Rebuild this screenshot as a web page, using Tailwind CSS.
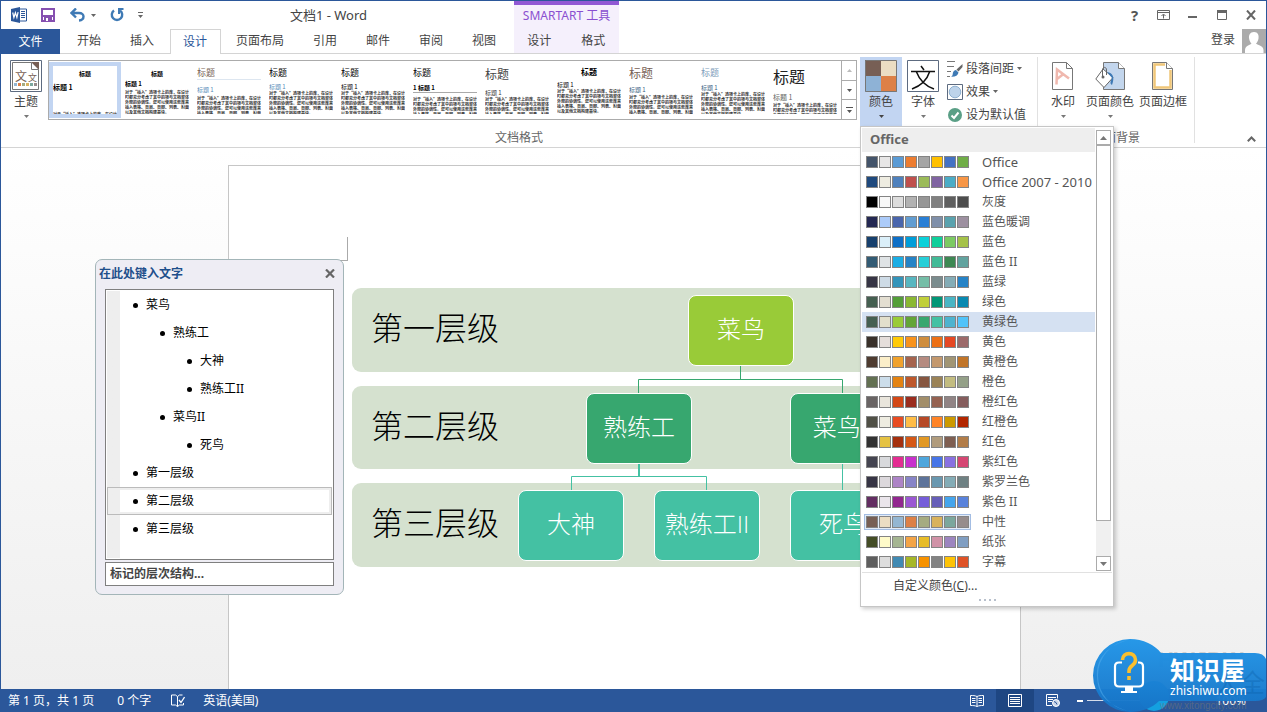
<!DOCTYPE html>
<html lang="zh-CN">
<head>
<meta charset="utf-8">
<title>文档1 - Word</title>
<script src="https://cdn.jsdelivr.net/npm/@tailwindcss/browser@4"></script>
</head>
<body class="min-h-screen flex flex-col overflow-hidden border border-b-0 border-[#2b579a] bg-white text-[12px] leading-[16px] text-[#444] font-['Noto_Sans','Noto_Sans_CJK_SC',sans-serif]">

<!-- Title bar -->
<header class="flex h-7 items-stretch">
  <div class="flex w-[513px] items-center">
    <div class="flex items-center pl-[10px]">
      <svg class="w-4 h-4" viewBox="0 0 16 16"><path d="M8 2h7.5v12H8z" fill="#fff" stroke="#2b579a"/><path d="M10 4.5h4M10 6.5h4M10 8.5h4M10 10.5h4" stroke="#2b579a"/><path d="M0 2l9-2v16l-9-2z" fill="#2b579a"/><path d="M1.7 5.5l1.2 5 1.5-4.700 1.500 4.700 1.200-5.300" fill="none" stroke="#fff" stroke-width="1.200"/></svg>
      <button class="ml-[14px]" aria-label="保存"><svg class="w-[14px] h-[14px] block" viewBox="0 0 14 14"><path d="M1 1h12v12H1z" fill="none" stroke="#8650b0" stroke-width="2"/><path d="M1 7h12v2H1zM3 9h8v5H3z" fill="#8650b0"/><path d="M5 10h2v3H5z" fill="#fff"/></svg></button>
      <button class="ml-[15px]" aria-label="撤消"><svg class="w-[15px] h-[14px] block" viewBox="0 0 15 14"><path d="M6 .5L1.500 5 6 9.500M2 5h7c6 0 6 7 0 7.500" fill="none" stroke="#3f7ab5" stroke-width="2.400"/></svg></button>
      <button class="ml-[6px]" aria-label="撤消选项"><svg class="w-[5px] h-[3px] block" viewBox="0 0 5 3"><path d="M0 0h5L2.500 3z" fill="#666"/></svg></button>
      <button class="ml-[14px]" aria-label="恢复"><svg class="w-[14px] h-[14px] block" viewBox="0 0 14 14"><path d="M4 2.500a5.200 5.200 0 1 0 6 0" fill="none" stroke="#3f7ab5" stroke-width="2.400"/><path d="M8 0h5.500v2H10v4H8z" fill="#3f7ab5"/></svg></button>
      <button class="ml-[14px]" aria-label="自定义快速访问工具栏"><svg class="w-[5px] h-[6px] block" viewBox="0 0 5 6"><path d="M0 0h5v1H0zM0 3h5L2.500 6z" fill="#666"/></svg></button>
    </div>
    <h1 class="flex-1 text-center text-[13px]">文档1 - Word</h1>
  </div>
  <div class="w-[105px] border-t-4 border-[#9159d4] bg-[#f5f0fc] pt-[3px] text-center text-[#8a4fd0]">SMARTART 工具</div>
  <div class="ml-auto mr-px flex">
    <button class="w-[29px] text-[15px] font-bold text-[#555]" aria-label="帮助">?</button>
    <button class="w-[29px] grid place-items-center" aria-label="功能区显示选项"><svg class="w-[13px] h-[10px]" viewBox="0 0 13 10"><path d="M.5.5h12v9H.5zM.5 2.500h12M6.500 8.500v-4M4.500 6l2-2 2 2" fill="none" stroke="#666"/></svg></button>
    <button class="w-[29px] grid place-items-center" aria-label="最小化"><svg class="w-[9px] h-[10px]" viewBox="0 0 9 10"><path d="M0 6h9v2H0z" fill="#666"/></svg></button>
    <button class="w-[29px] grid place-items-center" aria-label="最大化"><svg class="w-[10px] h-[10px]" viewBox="0 0 10 10"><path d="M.5.500h9v9h-9z" fill="none" stroke="#666"/><path d="M0 0h10v3H0z" fill="#666"/></svg></button>
    <button class="w-[29px] grid place-items-center" aria-label="关闭"><svg class="w-[10px] h-[10px]" viewBox="0 0 10 10"><path d="M1 .5l8 9M9 .5l-8 9" stroke="#666" stroke-width="2"/></svg></button>
  </div>
</header>

<!-- Tabs -->
<nav class="flex h-[25px] items-stretch border-b border-[#d4d4d4]">
  <button class="w-[59px] -mb-px bg-[#2b579a] text-white">文件</button>
  <div class="flex gap-px pl-[3px]">
    <button class="px-[14px]">开始</button>
    <button class="px-[14px]">插入</button>
    <button class="ml-px pl-[12px] pr-[13px] -mb-px border border-b-0 border-[#d4d4d4] bg-white text-[#2b579a]">设计</button>
    <button class="px-[14px]">页面布局</button>
    <button class="px-[14px]">引用</button>
    <button class="px-[14px]">邮件</button>
    <button class="px-[14px]">审阅</button>
    <button class="px-[14px]">视图</button>
  </div>
  <div class="ml-1 flex w-[105px] gap-[30px] bg-[#f5f0fc] pl-[13px]">
    <button>设计</button>
    <button>格式</button>
  </div>
  <div class="ml-auto flex items-center gap-[7px]">
    <a href="#" class="pb-[2px]">登录</a>
    <svg class="w-6 h-6" viewBox="0 0 24 24"><path d="M0 0h24v24H0z" fill="#ababab"/><path d="M12 3c4 0 5 3 4.500 6.500-.4 2.500-1.500 4-2.500 5 1 1.500 7 1.500 7.500 6.500v3H3v-3c.5-5 5.500-5 6.500-6.500-1-1-2-2.500-2.400-5C6.600 6 8 3 12 3z" fill="#fff"/></svg>
  </div>
</nav>

<!-- Ribbon -->
<section class="relative z-20 flex h-[94px] border-b border-[#d4d4d4] bg-white pt-[3px]">
  <div class="flex w-[1037px] flex-col border-r border-[#e1e1e1] mb-1">
    <div class="flex h-[69px] shrink-0">
      <button class="ml-[5px] flex w-[40px] flex-col items-center pt-[3px]">
        <svg class="w-8 h-8" viewBox="0 0 32 32"><path d="M.5.500h31v31H.5z" fill="#fff" stroke="#5d6b80"/><path d="M2.500 2.500h19l7 7v20h-26z" fill="#fff" stroke="#777"/><path d="M21 2h8v8z" fill="#775f55"/><path d="M21.500 2.500v7h7" fill="#fff" stroke="#777"/><text x="5" y="21" font-size="12" fill="#775f55" font-family="Noto Sans CJK SC">文</text><text x="18" y="21" font-size="9" fill="#775f55" font-family="Noto Sans CJK SC">文</text><path d="M4 23h3v3H4z" fill="#94b6d2"/><path d="M8 23h3v3H8z" fill="#dd8047"/><path d="M12 23h3v3h-3z" fill="#a5ab81"/><path d="M16 23h3v3h-3z" fill="#d8b25c"/><path d="M20 23h3v3h-3z" fill="#7ba79d"/><path d="M24 23h3v3h-3z" fill="#968c8c"/></svg>
        <span class="mt-[2px]">主题</span>
        <svg class="mt-[5px] w-[5px] h-[3px]" viewBox="0 0 5 3"><path d="M0 0h5L2.500 3z" fill="#777"/></svg>
      </button>
      <div class="ml-[2px] mt-[3px] flex h-[60px] border border-[#ababab]">
        <div id="gallery" class="flex font-[family-name:'Noto_Sans_CJK_SC',sans-serif]"></div>
        <div class="flex w-[15px] flex-col divide-y divide-[#ababab] border-l border-[#ababab]">
          <button class="grid flex-1 place-items-center" aria-label="上一行"><svg class="w-[5px] h-[3px]" viewBox="0 0 5 3"><path d="M0 3h5L2.500 0z" fill="#bbb"/></svg></button>
          <button class="grid flex-1 place-items-center" aria-label="下一行"><svg class="w-[5px] h-[3px]" viewBox="0 0 5 3"><path d="M0 0h5L2.500 3z" fill="#555"/></svg></button>
          <button class="grid flex-1 place-items-center" aria-label="其他"><svg class="w-[7px] h-[6px]" viewBox="0 0 7 6"><path d="M0 0h7v1H0zM1 3h5L3.500 6z" fill="#555"/></svg></button>
        </div>
      </div>
      <div class="relative ml-[3px]">
        <button class="flex h-full w-[42px] flex-col items-center bg-[#c2d5f2] pt-[3px]" aria-expanded="true">
          <svg class="w-8 h-8" viewBox="0 0 32 32"><path d="M0 0h16v16H0z" fill="#775f55"/><path d="M16 0h16v16H16z" fill="#ebddc3"/><path d="M0 16h16v16H0z" fill="#8eb2d6"/><path d="M16 16h16v16H16z" fill="#dd8047"/><path d="M.5.500h31v31H.5z" fill="none" stroke="#777"/></svg>
          <span class="mt-[2px]">颜色</span>
          <svg class="mt-[5px] w-[5px] h-[3px]" viewBox="0 0 5 3"><path d="M0 0h5L2.500 3z" fill="#444"/></svg>
        </button>
        <!-- Theme colour menu -->
        <div class="absolute left-0 top-full w-[254px] border border-[#c6c6c6] bg-white p-px shadow-[2px_2px_4px_rgba(0,0,0,0.2)]">
          <div class="flex">
            <div class="flex-1">
              <h2 class="h-6 bg-[#eee] px-2 pt-[3px] text-[13px] leading-[16px] font-bold text-[#666]">Office</h2>
              <ul id="schemes"></ul>
            </div>
            <div class="mt-[2px] mb-px mr-px ml-px flex w-[15px] flex-col bg-[#f0f0f0]">
              <button class="grid h-[15px] place-items-center border border-[#ababab] bg-white" aria-label="向上滚动"><svg class="w-[7px] h-[4px]" viewBox="0 0 7 4"><path d="M0 4h7L3.500 0z" fill="#777"/></svg></button>
              <div class="h-[376px] border border-[#ababab] bg-white"></div>
              <button class="mt-auto grid h-[15px] place-items-center border border-[#ababab] bg-white" aria-label="向下滚动"><svg class="w-[7px] h-[4px]" viewBox="0 0 7 4"><path d="M0 0h7L3.500 4z" fill="#777"/></svg></button>
            </div>
          </div>
          <button class="block w-full border-t border-[#e1e1e1] pt-[5px] pl-[31px] text-left">自定义颜色(<u>C</u>)...</button>
          <div class="flex h-[11px] items-center justify-center gap-[3px]">
            <i class="size-[2px] bg-[#b8c0cc]"></i><i class="size-[2px] bg-[#b8c0cc]"></i><i class="size-[2px] bg-[#b8c0cc]"></i><i class="size-[2px] bg-[#b8c0cc]"></i>
          </div>
        </div>
      </div>
      <button class="flex w-[42px] flex-col items-center pt-[3px]">
        <svg class="w-8 h-8" viewBox="0 0 32 32"><path d="M.5.500h31v31H.5z" fill="#fff" stroke="#5d6b80"/><path d="M14 6l3 4M4 11.500h24M22.500 12C20 20 13 26 5 29M9.500 12c3 8 9 14 17.500 17" fill="none" stroke="#111" stroke-width="1.500"/></svg>
        <span class="mt-[2px]">字体</span>
        <svg class="mt-[5px] w-[5px] h-[3px]" viewBox="0 0 5 3"><path d="M0 0h5L2.500 3z" fill="#777"/></svg>
      </button>
      <div class="ml-[3px] flex flex-col">
        <button class="flex h-[23px] items-center gap-[3px]">
          <svg class="w-4 h-4" viewBox="0 0 16 16"><path d="M0 .5h8M0 5.500h7M0 10.500h4M0 15.500h3" stroke="#777"/><path d="M15.500 3v3l-4 4.500-2-2z" fill="#666"/><path d="M9 9l2.500 2.500c-.5 3-3 4.500-7.500 4.300 2-1 1.500-2.500 2-4.300.5-1.500 1.700-2.500 3-2.500z" fill="#3f7ab5"/></svg>
          <span>段落间距</span><svg class="w-[5px] h-[3px]" viewBox="0 0 5 3"><path d="M0 0h5L2.500 3z" fill="#666"/></svg>
        </button>
        <button class="flex h-[23px] items-center gap-[3px]">
          <svg class="w-4 h-4" viewBox="0 0 16 16"><path d="M.5.500h15v15H.5z" fill="#fff" stroke="#5d6b80"/><circle cx="8" cy="8" r="5.800" fill="#bdd3ea" stroke="#8fb0d0"/></svg>
          <span>效果</span><svg class="w-[5px] h-[3px]" viewBox="0 0 5 3"><path d="M0 0h5L2.500 3z" fill="#666"/></svg>
        </button>
        <button class="flex h-[23px] items-center gap-[3px]">
          <svg class="w-4 h-4" viewBox="0 0 16 16"><circle cx="8" cy="8" r="7" fill="#5a9f86"/><path d="M4.500 8.500l2.500 2.500 4.500-5.500" fill="none" stroke="#fff" stroke-width="2"/></svg>
          <span>设为默认值</span>
        </button>
      </div>
    </div>
    <div class="pt-1 text-center text-[#666]">文档格式</div>
  </div>
  <div class="mb-1 flex w-[157px] flex-col border-r border-[#e1e1e1]">
    <div class="flex h-[69px] shrink-0 justify-center pt-[4px]">
      <button class="flex w-[36px] flex-col items-center">
        <svg class="w-[22px] h-[30px]" viewBox="0 0 22 30"><path d="M.5 1.500h14l6 6v21H.5z" fill="#fff" stroke="#777"/><path d="M14.500 1.500v6h6" fill="none" stroke="#777"/><path d="M4.500 23.500l.5-15 12 9M5 18l6.500-5" fill="none" stroke="#f0b8ae" stroke-width="2.500"/></svg>
        <span class="mt-[3px]">水印</span>
        <svg class="mt-[5px] w-[5px] h-[3px]" viewBox="0 0 5 3"><path d="M0 0h5L2.500 3z" fill="#777"/></svg>
      </button>
      <button class="flex w-[58px] flex-col items-center">
        <svg class="w-[30px] h-[30px]" viewBox="0 0 30 30"><path d="M8.500 1.500h15l6 6v21h-21z" fill="#c3d6ed" stroke="#777"/><path d="M23.500 1.500v6h6" fill="#fff" stroke="#777"/><path d="M8 8L18 16.500 9 26.500.8 18z" fill="#fff" stroke="#666"/><path d="M7.500 16V9c0-3.500 4-3.500 4 0v5" fill="none" stroke="#666"/><circle cx="8" cy="16" r="1.500" fill="#666"/><path d="M12 11c6 1 8 5 5 13-2-1-2-3 0-7z" fill="#3f7ab5"/></svg>
        <span class="mt-[3px]">页面颜色</span>
        <svg class="mt-[5px] w-[5px] h-[3px]" viewBox="0 0 5 3"><path d="M0 0h5L2.500 3z" fill="#777"/></svg>
      </button>
      <button class="flex w-[48px] flex-col items-center">
        <svg class="w-[22px] h-[30px]" viewBox="0 0 22 30"><path d="M.5 1.500h14l6 6v21H.5z" fill="#fff" stroke="#777"/><path d="M13 3.500H2.500v23h16V9" fill="none" stroke="#f0c678" stroke-width="2.500"/><path d="M14.500 1.500v6h6" fill="#fff" stroke="#777"/></svg>
        <span class="mt-[3px]">页面边框</span>
      </button>
    </div>
    <div class="pt-1 text-center text-[#666]">页面背景</div>
  </div>
  <button class="ml-auto mr-[10px] mb-[5px] self-end" aria-label="折叠功能区"><svg class="w-[9px] h-[6px]" viewBox="0 0 9 6"><path d="M.8 5.200L4.500 1.500l3.700 3.700" fill="none" stroke="#666" stroke-width="2"/></svg></button>
</section>

<!-- Document area -->
<main class="flex flex-1 justify-center overflow-hidden bg-linear-to-b from-white to-[#efefef] pt-[17px] pr-[18px]">
  <div class="relative w-[793px] border border-b-0 border-[#c6c6c6] bg-white pt-[122px] pl-[123px]">
    <div class="absolute left-[94px] top-[71px] h-6 w-[25px] border-r border-b border-[#aaa]"></div>

    <!-- Hierarchy diagram -->
    <div class="relative flex w-[546px] flex-col gap-[14px] text-[32px] leading-[48px] font-light text-black">
      <div class="flex h-[84px] items-center rounded-[9px] bg-[#d5e1cf] pb-1 pl-[19px]">第一层级</div>
      <div class="flex h-[83px] items-center rounded-[9px] bg-[#d5e1cf] pb-1 pl-[19px]">第二层级</div>
      <div class="flex h-[84px] items-center rounded-[9px] bg-[#d5e1cf] pb-1 pl-[19px]">第三层级</div>
      <svg class="absolute inset-0 h-full w-full" fill="none"><path d="M388.500 78v13.500M286.500 105V91.500h204V105" stroke="#37a76f"/><path d="M287 174v14" stroke="#44c1a3" stroke-width="2"/><path d="M219.500 203v-14.500h135V203M490.500 174v29" stroke="#44c1a3"/></svg>
      <div id="nodes" class="contents text-2xl text-white"></div>
    </div>

    <!-- Text pane -->
    <aside class="absolute -left-[134px] top-[93px] w-[249px] rounded-[7px] border border-[#a3b5b8] bg-[#eeedf4] px-[9px] pt-[5px] pb-2 text-black">
      <div class="-ml-[6px] flex h-[17px] items-center justify-between font-bold text-[#1e4f8b]">
        <h2>在此处键入文字</h2>
        <button class="-mr-px" aria-label="关闭"><svg class="w-[10px] h-[9px]" viewBox="0 0 10 9"><path d="M1 .5l8 8M9 .500l-8 8" stroke="#666" stroke-width="2.200"/></svg></button>
      </div>
      <div class="mt-[7px] h-[271px] border border-[#7f7f7f] bg-white p-px">
        <ul id="outline" class="h-full bg-linear-to-r from-[#eee] from-[13px] to-white to-[13px]"></ul>
      </div>
      <div class="mt-[2px] h-[24px] border border-[#7f7f7f] bg-white px-1 pt-[3px] font-bold text-[#444]">标记的层次结构...</div>
    </aside>
  </div>
</main>

<!-- Status bar -->
<footer class="relative z-30 flex h-[23px] items-center bg-[#2b579a] text-white">
  <span class="ml-[7px]">第 1 页，共 1 页</span>
  <span class="ml-[23px]">0 个字</span>
  <svg class="ml-5 h-[13px] w-[14px]" viewBox="0 0 14 13" fill="none" stroke="#fff"><path d="M6.500 12.500V2.500L4.500 1H.5v10h4l2 1.500 2-1.500h4V9M6.500 2.500L8.500 1h3"/><path d="M8 6l2 2.500L13.500 3" stroke-width="1.300"/></svg>
  <span class="ml-[18px]">英语(美国)</span>
  <div class="ml-auto flex h-full items-center">
    <button class="grid h-full w-[38px] place-items-center" aria-label="阅读视图"><svg class="h-[12px] w-[14px]" viewBox="0 0 14 12" fill="none" stroke="#fff"><path d="M7 1.500C5 .5 3 .5.500.500v10c2.500 0 4.500 0 6.500 1 2-1 4-1 6.500-1V.5C11 .5 9 .500 7 1.500zM7 1.500v10M2 3.500h3.500M2 5.500h3.500M2 7.500h3.500M8.500 3.500H12M8.500 5.500H12M8.500 7.500H12"/></svg></button>
    <button class="grid h-full w-[38px] place-items-center bg-[#1e4682]" aria-label="页面视图"><svg class="h-[13px] w-[14px]" viewBox="0 0 14 13" fill="none" stroke="#fff"><path d="M.5.500h13v12H.5zM2 3.500h10M2 5.500h10M2 7.500h10M2 9.500h10"/></svg></button>
    <button class="grid h-full w-[38px] place-items-center" aria-label="Web 版式视图"><svg class="h-[13px] w-[14px]" viewBox="0 0 14 13" fill="none" stroke="#fff"><path d="M6 11.500H.5V.500h11v4M2 3.500h8M2 5.500h5M2 7.500h4"/><circle cx="10" cy="9" r="3.500" fill="#c9d5e8"/><path d="M8 7.500l2 1 1 2" stroke="#2b579a"/></svg></button>
    <button class="ml-[5px] h-[2px] w-[6px] bg-white" aria-label="缩小"></button>
    <div class="ml-1 h-px w-[104px] bg-white/80"></div>
    <span class="ml-[24px] mr-[20px]">100%</span>
  </div>

  <!-- Site badge over the corner -->
  <div class="absolute -right-px bottom-0 h-[73px] w-[175px] text-white">
    <svg class="absolute inset-0 h-full w-full" viewBox="0 0 175 73">
      <defs><linearGradient id="badge" x1="0" y1="0" x2="0" y2="1"><stop offset="0" stop-color="#2095e8"/><stop offset="1" stop-color="#1673c6"/></linearGradient></defs>
      <text x="66" y="28" font-size="22" font-weight="700" fill="#999" fill-opacity=".4" font-family="Liberation Sans">HWJDW</text>
      <circle cx="62" cy="57" r="15" fill="#14a0e0"/>
      <path d="M38 0c13 0 25 6 31 14h94q12 0 12 12v28q0 8-12 8H67C60 69 50 73 38 73A37 36.500 0 0 1 38 0z" fill="url(#badge)" fill-opacity=".97"/>
      <path d="M36 1A36 36 0 0 0 36 72C12 64 6 54 5 38S12 8 36 1z" fill="#56b0ee" fill-opacity=".5"/>
      <path d="M30 23.500h-3q-4 0-4 4v16q0 4 4 4h20q4 0 4-4v-16q0-4-4-4h-1M29 53h16" fill="none" stroke="#fff" stroke-width="2.200"/><path d="M33 47h8v5h-8z" fill="#fff"/>
      <path d="M30.500 21c0-8.500 13-8.500 13 0 0 6-6.500 5-6.500 11v2M37 37v4" fill="none" stroke="#fbbf2e" stroke-width="3.600"/>
      <text x="123" y="53" font-size="25" fill="#0a5fa8" fill-opacity=".35" font-family="Noto Sans CJK SC">大全</text>
      <text x="68" y="70" font-size="10" fill="#777" fill-opacity=".55" font-family="Liberation Sans">www.xitongcity.com</text>
    </svg>
    <div class="relative pl-[78px] pt-[18px]">
      <div class="text-[25px] leading-[26px] font-bold">知识屋</div>
      <div class="mt-px text-[12px] leading-[14px]">zhishiwu.com</div>
    </div>
  </div>
</footer>

<script>
const schemes = [
  ["Office", "44546A E7E6E6 5B9BD5 ED7D31 A5A5A5 FFC000 4472C4 70AD47"],
  ["Office 2007 - 2010", "1F497D EEECE1 4F81BD C0504D 9BBB59 8064A2 4BACC6 F79646"],
  ["灰度", "000000 F8F8F8 DDDDDD B2B2B2 969696 808080 5F5F5F 4D4D4D"],
  ["蓝色暖调", "242852 ACCBF9 4A66AC 629DD1 297FD5 7F8FA9 5AA2AE 9D90A0"],
  ["蓝色", "17406D DBEFF9 0F6FC6 009DD9 0BD0D9 10CF9B 7CCA62 A5C249"],
  ["蓝色 II", "335B74 DFE3E5 1CADE4 2683C6 27CED7 42BA97 3E8853 62A39F"],
  ["蓝绿", "373545 CEDBE6 3494BA 58B6C0 75BDA7 7A8C8E 84ACB6 2683C6"],
  ["绿色", "455F51 E3DED1 549E39 8AB833 C0CF3A 029676 4AB5C4 0989B1"],
  ["黄绿色", "455F51 E2DFCC 99CB38 63A537 37A76F 44C1A3 4EB3CF 51C3F9"],
  ["黄色", "39302A E5DEDB FFCA08 F8931D CE8D3E EC7016 E64823 9C6A6A"],
  ["黄橙色", "4E3B30 FBEEC9 F0A22E A5644E B58B80 C3986D A19574 C17529"],
  ["橙色", "637052 CCDDEA E48312 BD582C 865640 9B8357 C2BC80 94A088"],
  ["橙红色", "696464 E9E5DC D34817 9B2D1F A28E6A 956251 918485 855D5D"],
  ["红橙色", "505046 EEECE1 E84C22 FFBD47 B64926 FF8427 CC9900 B22600"],
  ["红色", "323232 E5C243 A5300F D55816 E19825 B19C7D 7F5F52 B27D49"],
  ["紫红色", "454551 D8D9DC E32D91 C830CC 4EA6DC 4775E7 8971E1 D54773"],
  ["紫罗兰色", "373545 DCD8DC AD84C6 8784C7 5D739A 6997AF 84ACB6 6F8183"],
  ["紫色 II", "632E62 EAE5EB 92278F 9B57D3 755DD9 665EB8 45A5ED 5982DB"],
  ["中性", "775F55 EBDDC3 94B6D2 DD8047 A5AB81 D8B25C 7BA79D 968C8C"],
  ["纸张", "444D26 FEFAC9 A5B592 F3A447 E7BC29 D092A7 9C85C0 809EC2"],
  ["字幕", "5E5E5E DDDDDD 418AB3 A6B727 F69200 838383 FEC306 DF5327"]
];
document.getElementById("schemes").innerHTML = schemes.map(([name, colors]) => {
  const hover = name === "黄绿色" ? "bg-[#d5e1f2]" : "";
  const frame = name === "中性" ? "border-[#a3bde3] bg-[#e3ebf7]" : "border-transparent";
  const size = name.startsWith("Office") ? "text-[13px]" : "";
  const boxes = colors.split(" ").map(c => `<i class="size-3 border border-[#848484]" style="background:#${c}"></i>`).join("");
  return `<li><button class="flex h-5 w-full items-center pl-[2px] text-[#555] ${hover}"><span class="flex gap-px border p-px ${frame}">${boxes}</span><span class="ml-[11px] ${size}">${name}</span></button></li>`;
}).join("");

const body = "对于“插入”选项卡上的库，在设计时都充分考虑了其中的项与文档整体外观的协调性。您可以使用这些库来插入表格、页眉、页脚、列表、封面以及其他文档构建基块。";
const styles = [
  ["pt-[4px] text-[6px] leading-[8px] text-center font-bold text-black", "pt-[5px] pb-[21px] text-[7px] leading-[8px] font-bold text-black", "标题 1"],
  ["pt-[4px] text-[6px] leading-[8px] text-center font-bold text-black", "pt-[3px] pb-[3px] text-[6px] leading-[6px] font-bold text-black", "标题 1"],
  ["text-[9px] leading-[13px] text-[#775f55] border-b border-[#dde6f0]", "pt-[7px] pb-[3px] text-[6px] leading-[6px] text-[#548ab7]", "标题 1"],
  ["text-[9px] leading-[13px] text-black", "pt-[5px] pb-px text-[6px] leading-[6px] text-[#548ab7]", "标题 1"],
  ["text-[9px] leading-[13px] text-black", "pt-[5px] pb-px text-[6px] leading-[6px] text-black", "标题 1"],
  ["text-[9px] leading-[13px] text-black", "pt-[5px] mb-[4px] text-[6px] leading-[8px] font-bold text-black border-b border-[#aaa]", "1 标题 1"],
  ["text-[12px] leading-[16px] text-[#444]", "pt-[8px] pb-px text-[6px] leading-[6px] text-[#333]", "标题 1"],
  ["text-[8px] leading-[11px] text-center font-bold text-black", "pt-[5px] pb-px text-[6px] leading-[6px] text-black", "标题 1"],
  ["text-[12px] leading-[14px] text-[#775f55]", "pt-[7px] pb-[2px] text-[6px] leading-[6px] text-[#355d7e]", "标题 1"],
  ["text-[9px] leading-[14px] text-[#7d9cba]", "pt-[5px] pb-px text-[6px] leading-[6px] text-[#355d7e]", "标题 1"],
  ["text-[16px] leading-[20px] text-[#222]", "pt-[8px] pb-[3px] text-[7px] leading-[6px] text-[#666]", "标题 1"]
];
document.getElementById("gallery").innerHTML = styles.map(([title, head, label], i) => {
  const frame = i === 0 ? "border-[#c2d5f2]" : "border-transparent";
  return `<button class="my-px h-[56px] w-[72px] border-4 ${frame}"><span class="block h-[48px] w-full overflow-hidden text-left"><span class="block ${title}">标题</span><span class="block ${head}">${label}</span><span class="block text-[4px] leading-[5px] font-bold text-[#333]">${body}</span></span></button>`;
}).join("");

const items = [[1,"菜鸟"],[2,"熟练工"],[3,"大神"],[3,"熟练工II"],[2,"菜鸟II"],[3,"死鸟"],[1,"第一层级"],[1,"第二层级"],[1,"第三层级"]];
const indent = {1: "pl-[25px]", 2: "pl-[52px]", 3: "pl-[79px]"};
document.getElementById("outline").innerHTML = items.map(([level, text]) => {
  const current = text === "第二层级" ? "border-[#bbb] shadow-[inset_-2px_0_0_#eee,inset_0_2px_0_#eee,inset_0_-2px_0_#eee]" : "border-transparent";
  return `<li class="flex h-7 items-center gap-2 border ${current} ${indent[level]}"><i class="size-[5px] rounded-full bg-black"></i>${text}</li>`;
}).join("");

const nodes = [
  ["菜鸟", "", "left-[336px] top-[7px] bg-[#99cb38]"],
  ["熟练工", "", "left-[234px] top-[105px] bg-[#37a76f]"],
  ["菜鸟", "II", "left-[438px] top-[105px] bg-[#37a76f]"],
  ["大神", "", "left-[166px] top-[202px] bg-[#44c1a3]"],
  ["熟练工", "II", "left-[302px] top-[202px] bg-[#44c1a3]"],
  ["死鸟", "", "left-[438px] top-[202px] bg-[#44c1a3]"]
];
document.getElementById("nodes").innerHTML = nodes.map(([text, numeral, place]) =>
  `<div class="absolute grid h-[71px] w-[106px] place-items-center rounded-[8px] border border-white pb-1 ${place}"><span>${text}<span class="font-[family-name:Lato,sans-serif]">${numeral}</span></span></div>`).join("");
</script>
</body>
</html>
